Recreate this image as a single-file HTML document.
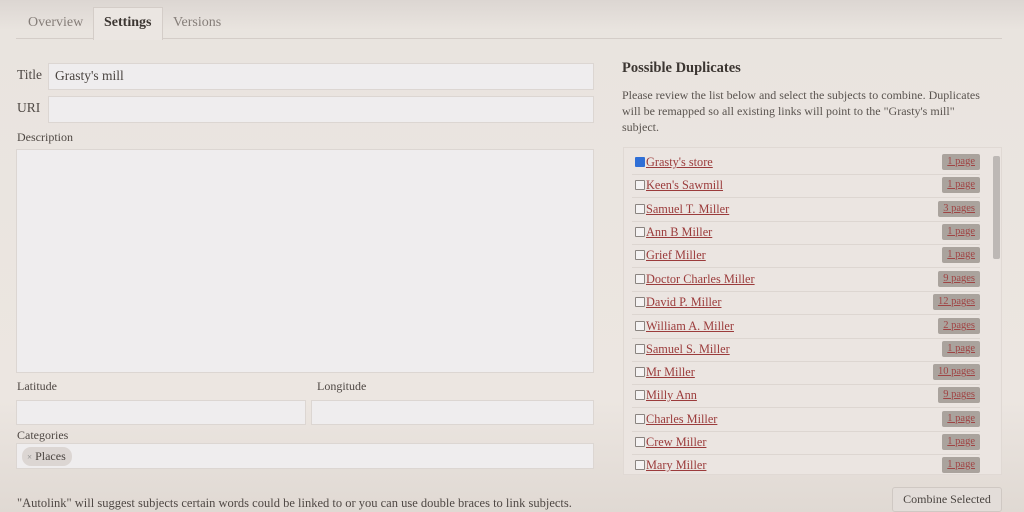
<!DOCTYPE html>
<html><head><style>
body{margin:0;width:1024px;height:512px;overflow:hidden;font-family:"Liberation Serif",serif;color:#4a4440;
background:linear-gradient(#dcd6d2 0px,#e9e4df 30px,#ece6e1 400px,#e0d9d3 512px);position:relative}
.a{position:absolute}
.inp{position:absolute;background:#efedee;border:1px solid #dcd6d2;box-sizing:border-box}
.lbl{position:absolute;font-size:12px;color:#4f4844}
.tab{position:absolute;top:8px;height:30px;font-size:14px;line-height:30px;color:#857d78}
.row{position:absolute;left:632px;width:348px;height:23px;border-bottom:1px solid #ddd6d1;font-size:12.3px}
.row span.n{position:absolute;left:14px;top:4px;color:#9b3b3b;text-decoration:underline}
.cb{position:absolute;left:3px;top:6px;width:8px;height:8px;border:1px solid #8a8480;background:#f5f3f3;border-radius:1px}
.pg{position:absolute;right:0;top:3px;height:16px;line-height:16px;background:#aaa39d;color:#a04444;font-size:10.5px;padding:0 5px;text-decoration:underline;border-radius:2px}
</style></head><body>
<div class="a" style="left:16px;top:38px;width:986px;border-top:1px solid #d4cdc8"></div>
<div class="tab" style="left:28px">Overview</div>
<div class="a" style="left:93px;top:7px;width:68px;height:32px;border:1px solid #d4cdc8;border-bottom:none;background:#ebe6e2"></div>
<div class="tab" style="left:104px;color:#3c3632;font-weight:bold">Settings</div>
<div class="tab" style="left:173px">Versions</div>

<div class="lbl" style="left:17px;top:67px;font-size:13.5px">Title</div>
<div class="inp" style="left:48px;top:63px;width:546px;height:27px"><span style="position:absolute;left:6px;top:4px;font-size:13.5px;color:#4a4440">Grasty's mill</span></div>
<div class="lbl" style="left:17px;top:100px;font-size:13.5px">URI</div>
<div class="inp" style="left:48px;top:96px;width:546px;height:27px"></div>
<div class="lbl" style="left:17px;top:130px">Description</div>
<div class="inp" style="left:16px;top:149px;width:578px;height:224px"></div>
<div class="lbl" style="left:17px;top:379px">Latitude</div>
<div class="lbl" style="left:317px;top:379px">Longitude</div>
<div class="inp" style="left:16px;top:400px;width:290px;height:25px"></div>
<div class="inp" style="left:311px;top:400px;width:283px;height:25px"></div>
<div class="lbl" style="left:17px;top:428px">Categories</div>
<div class="inp" style="left:16px;top:443px;width:578px;height:26px"><span style="position:absolute;left:5px;top:3px;background:#dcd6d3;border-radius:9px;padding:2px 6px 2px 5px;font-size:12px"><span style="font-size:9px;color:#888">×</span> Places</span></div>
<div class="lbl" style="left:17px;top:496px;font-size:12.5px">"Autolink" will suggest subjects certain words could be linked to or you can use double braces to link subjects.</div>

<div class="a" style="left:622px;top:60px;font-size:14.5px;font-weight:bold;color:#3c3632">Possible Duplicates</div>
<div class="a" style="left:622px;top:87px;width:372px;font-size:12px;line-height:16px;color:#5a534f">Please review the list below and select the subjects to combine. Duplicates will be remapped so all existing links will point to the "Grasty's mill" subject.</div>
<div class="a" style="left:623px;top:147px;width:379px;height:328px;background:#ebe5e1;border:1px solid #e0d9d4;box-sizing:border-box"></div>
<div class="a" style="left:993px;top:156px;width:7px;height:103px;background:#bdb8b5;border-radius:2px"></div>
<div class="row" style="top:151px"><div class="cb" style="background:#2f6fd6;border-color:#2f6fd6"></div><span class="n">Grasty's store</span><span class="pg">1 page</span></div>
<div class="row" style="top:174px"><div class="cb"></div><span class="n">Keen's Sawmill</span><span class="pg">1 page</span></div>
<div class="row" style="top:198px"><div class="cb"></div><span class="n">Samuel T. Miller</span><span class="pg">3 pages</span></div>
<div class="row" style="top:221px"><div class="cb"></div><span class="n">Ann B Miller</span><span class="pg">1 page</span></div>
<div class="row" style="top:244px"><div class="cb"></div><span class="n">Grief Miller</span><span class="pg">1 page</span></div>
<div class="row" style="top:268px"><div class="cb"></div><span class="n">Doctor Charles Miller</span><span class="pg">9 pages</span></div>
<div class="row" style="top:291px"><div class="cb"></div><span class="n">David P. Miller</span><span class="pg">12 pages</span></div>
<div class="row" style="top:315px"><div class="cb"></div><span class="n">William A. Miller</span><span class="pg">2 pages</span></div>
<div class="row" style="top:338px"><div class="cb"></div><span class="n">Samuel S. Miller</span><span class="pg">1 page</span></div>
<div class="row" style="top:361px"><div class="cb"></div><span class="n">Mr Miller</span><span class="pg">10 pages</span></div>
<div class="row" style="top:384px"><div class="cb"></div><span class="n">Milly Ann</span><span class="pg">9 pages</span></div>
<div class="row" style="top:408px"><div class="cb"></div><span class="n">Charles Miller</span><span class="pg">1 page</span></div>
<div class="row" style="top:431px"><div class="cb"></div><span class="n">Crew Miller</span><span class="pg">1 page</span></div>
<div class="row" style="top:454px;border:none"><div class="cb"></div><span class="n">Mary Miller</span><span class="pg">1 page</span></div>
<div class="a" style="left:892px;top:487px;width:110px;height:25px;background:#e3ddd9;border:1px solid #cfc8c3;box-sizing:border-box;border-radius:3px;font-size:12px;text-align:center;line-height:23px;color:#4a4440">Combine Selected</div>
</body></html>
